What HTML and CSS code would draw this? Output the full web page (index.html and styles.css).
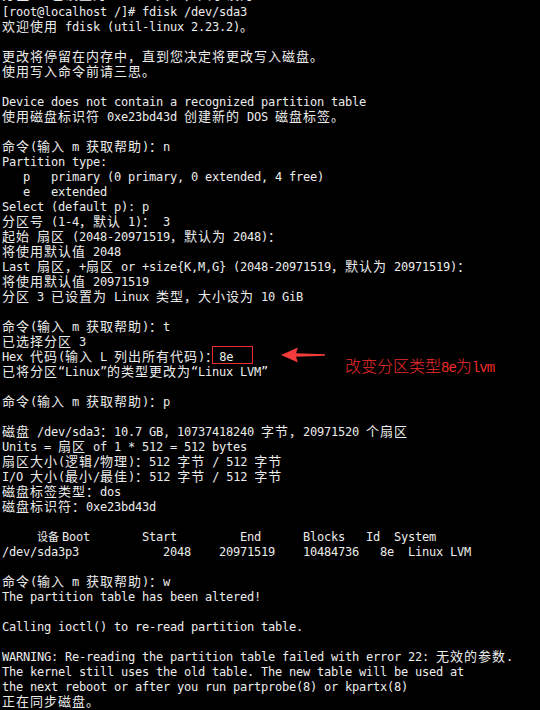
FILE: index.html
```html
<!DOCTYPE html>
<html lang="zh-CN">
<head>
<meta charset="utf-8">
<title>fdisk</title>
<link rel="stylesheet" href="styles.css">
</head>
<body>
<div class="term">
<div class="l cut"><span class="c">分区</span> 3 <span class="c">已设置为</span> Linux <span class="c">类型，大小设为</span> 10 GiB</div>
<div class="l">[root@localhost /]# fdisk /dev/sda3</div>
<div class="l"><span class="c">欢迎使用</span> fdisk (util-linux 2.23.2)<span class="c">。</span></div>
<div class="l"></div>
<div class="l"><span class="c">更改将停留在内存中，直到您决定将更改写入磁盘。</span></div>
<div class="l"><span class="c">使用写入命令前请三思。</span></div>
<div class="l"></div>
<div class="l">Device does not contain a recognized partition table</div>
<div class="l"><span class="c">使用磁盘标识符</span> 0xe23bd43d <span class="c">创建新的</span> DOS <span class="c">磁盘标签。</span></div>
<div class="l"></div>
<div class="l"><span class="c">命令</span>(<span class="c">输入</span> m <span class="c">获取帮助</span>)<span class="c">：</span>n</div>
<div class="l">Partition type:</div>
<div class="l">   p   primary (0 primary, 0 extended, 4 free)</div>
<div class="l">   e   extended</div>
<div class="l">Select (default p): p</div>
<div class="l"><span class="c">分区号</span> (1-4<span class="c">，默认</span> 1)<span class="c">：</span> 3</div>
<div class="l"><span class="c">起始</span> <span class="c">扇区</span> (2048-20971519<span class="c">，默认为</span> 2048)<span class="c">：</span></div>
<div class="l"><span class="c">将使用默认值</span> 2048</div>
<div class="l">Last <span class="c">扇区，</span>+<span class="c">扇区</span> or +size{K,M,G} (2048-20971519<span class="c">，默认为</span> 20971519)<span class="c">：</span></div>
<div class="l"><span class="c">将使用默认值</span> 20971519</div>
<div class="l"><span class="c">分区</span> 3 <span class="c">已设置为</span> Linux <span class="c">类型，大小设为</span> 10 GiB</div>
<div class="l"></div>
<div class="l"><span class="c">命令</span>(<span class="c">输入</span> m <span class="c">获取帮助</span>)<span class="c">：</span>t</div>
<div class="l"><span class="c">已选择分区</span> 3</div>
<div class="l">Hex <span class="c">代码</span>(<span class="c">输入</span> L <span class="c">列出所有代码</span>)<span class="c">：</span>8e</div>
<div class="l"><span class="c">已将分区</span>“Linux”<span class="c">的类型更改为</span>“Linux LVM”</div>
<div class="l"></div>
<div class="l"><span class="c">命令</span>(<span class="c">输入</span> m <span class="c">获取帮助</span>)<span class="c">：</span>p</div>
<div class="l"></div>
<div class="l"><span class="c">磁盘</span> /dev/sda3<span class="c">：</span>10.7 GB, 10737418240 <span class="c">字节，</span>20971520 <span class="c">个扇区</span></div>
<div class="l">Units = <span class="c">扇区</span> of 1 * 512 = 512 bytes</div>
<div class="l"><span class="c">扇区大小</span>(<span class="c">逻辑</span>/<span class="c">物理</span>)<span class="c">：</span>512 <span class="c">字节</span> / 512 <span class="c">字节</span></div>
<div class="l">I/O <span class="c">大小</span>(<span class="c">最小</span>/<span class="c">最佳</span>)<span class="c">：</span>512 <span class="c">字节</span> / 512 <span class="c">字节</span></div>
<div class="l"><span class="c">磁盘标签类型：</span>dos</div>
<div class="l"><span class="c">磁盘标识符：</span>0xe23bd43d</div>
<div class="l"></div>
<div class="l">     <span class="hdr"><span class="c tight">设备</span><span class="boot">Boot</span></span>Start         End      Blocks   Id  System</div>
<div class="l">/dev/sda3p3            2048    20971519    10484736   8e  Linux LVM</div>
<div class="l"></div>
<div class="l"><span class="c">命令</span>(<span class="c">输入</span> m <span class="c">获取帮助</span>)<span class="c">：</span>w</div>
<div class="l">The partition table has been altered!</div>
<div class="l"></div>
<div class="l">Calling ioctl() to re-read partition table.</div>
<div class="l"></div>
<div class="l">WARNING: Re-reading the partition table failed with error 22: <span class="c">无效的参数</span>.</div>
<div class="l">The kernel still uses the old table. The new table will be used at</div>
<div class="l">the next reboot or after you run partprobe(8) or kpartx(8)</div>
<div class="l"><span class="c">正在同步磁盘。</span></div>
</div>

<div class="mark-box"></div>
<svg class="mark-arrow" width="46" height="18" viewBox="0 0 46 18">
  <polygon points="1,9 18,1.5 16,7.2 45,8.3 45,9.7 16,10.8 18,16.5" fill="#f23b3b"/>
</svg>
<div class="mark-label"><span class="lc">改变分区类型</span><span class="lm">8e</span><span class="lc">为</span><span class="lm">lvm</span></div>
</body>
</html>
```

FILE: styles.css
```css
html, body {
  margin: 0;
  padding: 0;
  background: #000;
  width: 540px;
  height: 710px;
  overflow: hidden;
}

.term {
  margin-top: -12px;
  padding-left: 2px;
  color: #ececec;
  font-family: "DejaVu Sans Mono", "Liberation Mono", monospace;
  font-size: 12px;
  letter-spacing: -0.224px;
}

.l {
  height: 15px;
  line-height: 15px;
  white-space: pre;
}

.l.cut {
  height: 17px;
}

.c {
  font-family: "Noto Sans CJK SC", "Noto Sans CJK TC", sans-serif;
  font-size: 13px;
  letter-spacing: 1px;
  line-height: 12px;
}

.hdr {
  display: inline-block;
  width: 105px;
}

.tight {
  font-size: 11px;
  letter-spacing: 0;
}

.boot {
  margin-left: 3px;
}

.mark-box {
  position: absolute;
  left: 212px;
  top: 346px;
  width: 41px;
  height: 18px;
  box-sizing: border-box;
  border: 1px solid #e8302e;
}

.mark-arrow {
  position: absolute;
  left: 280px;
  top: 346px;
}

.mark-label {
  position: absolute;
  left: 345px;
  top: 357px;
  color: #f02c2c;
  font-size: 16px;
  line-height: 16px;
  white-space: nowrap;
}

.lc {
  font-family: "Noto Sans CJK SC", sans-serif;
  font-weight: 300;
}

.lm {
  font-family: "Liberation Mono", monospace;
  font-size: 14px;
  letter-spacing: -1px;
}
```
